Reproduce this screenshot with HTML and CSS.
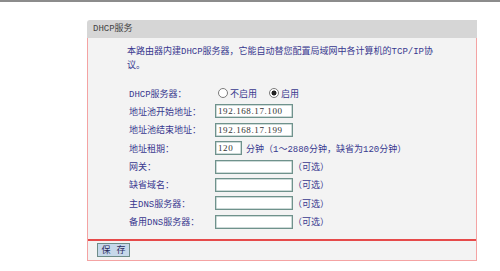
FILE: index.html
```html
<!doctype html>
<html lang="zh-CN">
<head>
  <meta charset="utf-8">
  <title>DHCP服务</title>
  <link rel="stylesheet" href="styles.css">
</head>
<body>
  <div class="topline"></div>

  <div class="panel">
    <div class="panel-title">DHCP服务</div>
    <div class="panel-body">
      <div class="content">
        <p class="desc">本路由器内建DHCP服务器，它能自动替您配置局域网中各计算机的TCP/IP协议。</p>

        <div class="form">
          <div class="row">
            <span class="label">DHCP服务器：</span>
            <span class="field">
              <label class="radio"><input type="radio" name="dhcp">不启用</label>
              <label class="radio"><input type="radio" name="dhcp" checked>启用</label>
            </span>
          </div>
          <div class="row">
            <span class="label">地址池开始地址：</span>
            <span class="field"><input class="text" type="text" value="192.168.17.100"></span>
          </div>
          <div class="row">
            <span class="label">地址池结束地址：</span>
            <span class="field"><input class="text" type="text" value="192.168.17.199"></span>
          </div>
          <div class="row">
            <span class="label">地址租期：</span>
            <span class="field"><input class="text short" type="text" value="120"><span class="hint">分钟（1～2880分钟，缺省为120分钟）</span></span>
          </div>
          <div class="row">
            <span class="label">网关：</span>
            <span class="field"><input class="text" type="text"><span class="opt">（可选）</span></span>
          </div>
          <div class="row">
            <span class="label">缺省域名：</span>
            <span class="field"><input class="text" type="text"><span class="opt">（可选）</span></span>
          </div>
          <div class="row">
            <span class="label">主DNS服务器：</span>
            <span class="field"><input class="text" type="text"><span class="opt">（可选）</span></span>
          </div>
          <div class="row">
            <span class="label">备用DNS服务器：</span>
            <span class="field"><input class="text" type="text"><span class="opt">（可选）</span></span>
          </div>
        </div>
      </div>

      <div class="actions">
        <button class="save">保 存</button>
      </div>
    </div>
  </div>
</body>
</html>
```

FILE: styles.css
```css
/* page */

html, body {
  margin: 0;
  padding: 0;
  background: #ffffff;
}

body {
  font-family: "Liberation Mono", "Noto Sans CJK SC", monospace;
  font-size: 9px;
  color: #38388f;
}

.topline {
  height: 2px;
  background: #8c8c8c;
}

/* panel */

.panel {
  width: 390px;
  margin: 18px 0 0 87px;
}

.panel-title {
  height: 18px;
  line-height: 18px;
  padding-left: 6px;
  background: #d6d6d6;
  border-radius: 3px 0 0 0;
  color: #444444;
}

.panel-body {
  background: #f3f3f3;
  border: 1px solid #f4a3a3;
  border-top: none;
}

.content {
  padding: 7px 0 10px 39px;
}

.desc {
  width: 318px;
  margin: 0;
  line-height: 14px;
}

/* form rows */

.form {
  margin-top: 13px;
  display: flex;
  flex-direction: column;
  gap: 4.4px;
}

.row {
  display: flex;
  align-items: center;
  height: 14px;
}

.label {
  width: 86px;
  padding-left: 2px;
  white-space: nowrap;
}

.field {
  display: flex;
  align-items: center;
  white-space: nowrap;
}

.radio {
  display: flex;
  align-items: center;
  margin-left: 3px;
  margin-right: 9px;
}

.radio input {
  appearance: none;
  width: 10px;
  height: 10px;
  margin: 0 2px 0 0;
  border: 1px solid #7b7b7b;
  border-radius: 50%;
  background: #ffffff;
  box-sizing: border-box;
}

.radio input:checked {
  background: radial-gradient(circle, #222222 0 2.2px, #ffffff 2.8px);
}

.text {
  width: 78px;
  height: 14px;
  box-sizing: border-box;
  margin: 0;
  padding: 0 2px;
  border: 1px solid #6f928c;
  box-shadow: inset 0 0 0 0.5px #9cb6b1;
  background: #ffffff;
  font-family: "Liberation Serif", serif;
  font-size: 9px;
  letter-spacing: 0.6px;
  color: #333333;
}

.text.short {
  width: 27px;
}

.hint {
  margin-left: 4px;
}

/* footer */

.actions {
  border-top: 2px solid #e64a4a;
  padding: 2px 0 3px 9px;
}

.save {
  width: 33px;
  height: 14px;
  padding: 0 0 0 3px;
  border: 1px solid #6e8c88;
  background: #c6d8ea;
  font-family: "Noto Sans CJK SC", sans-serif;
  font-size: 9px;
  line-height: 12px;
  letter-spacing: 3px;
  word-spacing: -2px;
  color: #2b2b5e;
  display: block;
}
```
